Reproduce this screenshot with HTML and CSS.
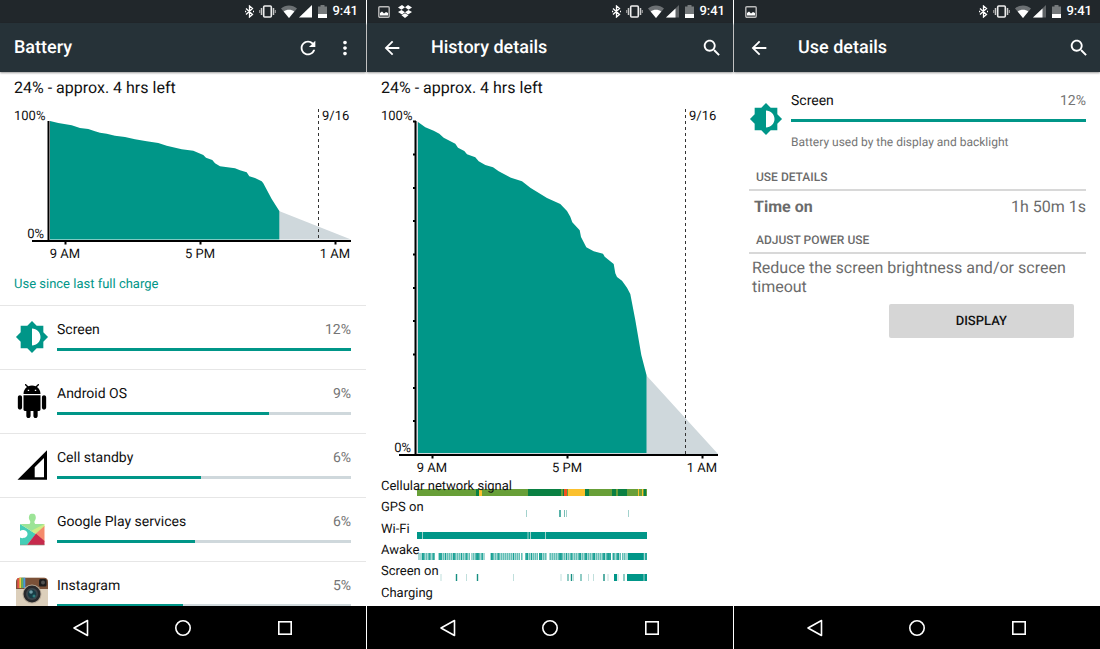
FILE: index.html
```html
<!DOCTYPE html>
<html lang="en">
<head>
    <meta charset="UTF-8">
    <meta name="viewport" content="width=device-width, initial-scale=1.0">
    <title>Battery</title>

    <link rel="stylesheet" href="styles.css">
</head>
<body>

    <!-- shared icons -->
    <svg class="sprite" aria-hidden="true">
        <symbol id="bluetooth" viewBox="0 0 9 13">
            <path d="M1 3.500l6.500 6L4.500 12V1l3 2.500L1 9.500M0 6.500h1.200M8 6.500h1" fill="none" stroke="#fff" stroke-width="1.300"/>
        </symbol>
        <symbol id="vibrate" viewBox="0 0 17 13">
            <rect x="4.700" y="1" width="7.600" height="11" rx="1" fill="none" stroke="#eee" stroke-width="1.600"/>
            <path d="M2.500 3v7M14.500 3v7" stroke="#ccc" stroke-width="1.500"/>
            <path d="M.7 5v3M16.300 5v3" stroke="#999" stroke-width="1.200"/>
        </symbol>
        <symbol id="wifi" viewBox="0 0 16 13">
            <path d="M0 3.500C4.500-.5 11.500-.5 16 3.500L8 13z" fill="#6c7073"/>
            <path d="M2.700 6.500C5.500 4.200 10.500 4.200 13.300 6.500L8 13z" fill="#fff"/>
        </symbol>
        <symbol id="signal" viewBox="0 0 13 13">
            <path d="M13 0v12.500H0z" fill="#fff"/>
        </symbol>
        <symbol id="signal-low" viewBox="0 0 13 13">
            <path d="M13 0v12.500H0z" fill="#5f6366"/>
            <path d="M9.500 3.400v9.100H0z" fill="#fff"/>
        </symbol>
        <symbol id="battery" viewBox="0 0 9 13">
            <path d="M2.500 0h4v1.500H9V9H0V1.500h2.500z" fill="#75797b"/>
            <path d="M0 9h9v4H0z" fill="#fff"/>
        </symbol>
        <symbol id="picture" viewBox="0 0 12 12">
            <rect x=".8" y=".8" width="10.400" height="10.400" rx="1" fill="none" stroke="#bbb" stroke-width="1.400"/>
            <path d="M2 9.500V7l2-1.500L6 7.500 8 6l2 1v2.500z" fill="#fff"/>
        </symbol>
        <symbol id="dropbox" viewBox="0 0 14 13">
            <path d="M4 0L7 2.300 3.500 4.700 0 2.600zM10 0l4 2.600-3.500 2.100L7 2.300zM0 7l3.500-2.100L7 7.300 4 9.500zM14 7l-3.500-2.100L7 7.300 10 9.500zM3.500 10.300L7 8.200l3.500 2.100L7 13z" fill="#fff"/>
        </symbol>
        <symbol id="arrow" viewBox="0 0 24 24">
            <path d="M20 11H7.830l5.590-5.590L12 4l-8 8 8 8 1.410-1.410L7.830 13H20v-2z" fill="#fff"/>
        </symbol>
        <symbol id="search" viewBox="0 0 24 24">
            <path d="M15.500 14h-.79l-.28-.27C15.410 12.590 16 11.110 16 9.500 16 5.910 13.090 3 9.500 3S3 5.910 3 9.500 5.910 16 9.500 16c1.610 0 3.090-.59 4.230-1.570l.27.28v.79l5 4.990L20.490 19l-4.990-5zm-6 0C7.010 14 5 11.990 5 9.500S7.010 5 9.500 5 14 7.010 14 9.500 11.990 14 9.500 14z" fill="#fff"/>
        </symbol>
        <symbol id="brightness" viewBox="0 0 24 24">
            <path d="M20 15.310L23.310 12 20 8.690V4h-4.690L12 .69 8.690 4H4v4.690L.69 12 4 15.310V20h4.690L12 23.310 15.310 20H20v-4.690zM12 18V6c3.310 0 6 2.690 6 6s-2.690 6-6 6z" fill="#009688"/>
        </symbol>
        <symbol id="nav-back" viewBox="0 0 20 20">
            <path d="M16.500 2.500v15L3 10z" fill="none" stroke="#fff" stroke-width="1.600" stroke-linejoin="round"/>
        </symbol>
        <symbol id="nav-home" viewBox="0 0 20 20">
            <circle cx="10" cy="10" r="7.200" fill="none" stroke="#fff" stroke-width="1.600"/>
        </symbol>
        <symbol id="nav-recent" viewBox="0 0 20 20">
            <rect x="3.800" y="3.800" width="12.400" height="12.400" fill="none" stroke="#fff" stroke-width="1.600"/>
        </symbol>
    </svg>

    <main class="screens">

        <!-- BATTERY -->
        <section class="screen">
            <div class="status-bar">
                <div class="status-icons">
                    <svg width="9" height="13"><use href="#bluetooth"/></svg>
                    <svg width="17" height="13"><use href="#vibrate"/></svg>
                    <span class="network">
                        <svg width="16" height="13"><use href="#wifi"/></svg>
                        <svg width="13" height="13"><use href="#signal"/></svg>
                    </span>
                    <svg width="9" height="13"><use href="#battery"/></svg>
                    <span class="clock">9:41</span>
                </div>
            </div>
            <header class="app-bar">
                <h1>Battery</h1>
                <button class="icon-button" aria-label="Refresh">
                    <svg viewBox="0 0 24 24"><path d="M17.650 6.350C16.200 4.900 14.210 4 12 4c-4.420 0-7.990 3.580-7.990 8s3.570 8 7.990 8c3.730 0 6.840-2.550 7.730-6h-2.080c-.82 2.330-3.040 4-5.650 4-3.310 0-6-2.690-6-6s2.690-6 6-6c1.660 0 3.140.69 4.220 1.780L13 11h7V4l-2.350 2.350z" fill="#fff"/></svg>
                </button>
                <button class="icon-button" aria-label="More options">
                    <svg viewBox="0 0 24 24"><path d="M12 8c1.100 0 2-.9 2-2s-.9-2-2-2-2 .9-2 2 .9 2 2 2zm0 2c-1.100 0-2 .9-2 2s.9 2 2 2 2-.9 2-2-.9-2-2-2zm0 6c-1.100 0-2 .9-2 2s.9 2 2 2 2-.9 2-2-.9-2-2-2z" fill="#fff"/></svg>
                </button>
            </header>

            <div class="content">
                <p class="summary">24% - approx. 4 hrs left</p>
                <svg class="chart" viewBox="0 0 366 163">
                    <polygon class="projected" points="279,109 351,137.500 279,137.500"/>
                    <polygon class="used" points="50,19 58.300,21 71.700,23.300 80,26 88.300,27 95,29.300 100,30.700 106.700,31.700 115,33.700 125,35 135,37.300 146.700,39.300 158.300,41 166.700,43.700 181.700,47.300 193.300,48.700 203.300,53 206,55.700 212.300,58 215,61.300 220,64.300 235,66.300 240,68.300 246.700,70.300 249.300,74.300 255,76 261.700,79.300 263.300,81.300 271.700,97 279.300,109 279.300,137.500 50,137.500"/>
                    <path class="axis" d="M48.500 19v120M32 139h319M65.500 139v3.500M200.500 139v3.500M335.500 139v3.500"/>
                    <path class="midnight" d="M318.500 7v131"/>
                    <text x="14" y="18">100%</text>
                    <text x="44" y="136" text-anchor="end">0%</text>
                    <text x="322" y="18">9/16</text>
                    <text x="65" y="156" text-anchor="middle">9 AM</text>
                    <text x="200" y="156" text-anchor="middle">5 PM</text>
                    <text x="335" y="156" text-anchor="middle">1 AM</text>
                </svg>
                <h2 class="caption">Use since last full charge</h2>

                <ul class="usage-list">
                    <li class="usage">
                        <svg class="app-icon" viewBox="0 0 24 24"><use href="#brightness"/></svg>
                        <div class="usage-body">
                            <div class="usage-text"><span>Screen</span><span class="percent">12%</span></div>
                            <div class="bar"><div class="fill" style="width: 100%"></div></div>
                        </div>
                    </li>
                    <li class="usage">
                        <svg class="app-icon android" viewBox="0 0 24 24"><path d="M6 18c0 .55.45 1 1 1h1v3.500c0 .83.67 1.500 1.500 1.500s1.500-.67 1.500-1.500V19h2v3.500c0 .83.67 1.500 1.500 1.500s1.500-.67 1.500-1.500V19h1c.55 0 1-.45 1-1V8H6v10zM3.500 8C2.670 8 2 8.670 2 9.500v7c0 .83.67 1.500 1.500 1.500S5 17.330 5 16.500v-7C5 8.670 4.330 8 3.500 8zm17 0c-.83 0-1.500.67-1.500 1.500v7c0 .83.67 1.500 1.500 1.500s1.500-.67 1.500-1.500v-7c0-.83-.67-1.500-1.500-1.500zm-4.970-5.840l1.300-1.300c.2-.2.2-.51 0-.71-.2-.2-.51-.2-.71 0l-1.480 1.480C13.850 1.230 12.950 1 12 1c-.96 0-1.860.23-2.660.63L7.850.15c-.2-.2-.51-.2-.71 0-.2.2-.2.51 0 .71l1.310 1.310C6.970 3.260 6 5.010 6 7h12c0-1.990-.97-3.750-2.470-4.840zM10 5H9V4h1v1zm5 0h-1V4h1v1z"/></svg>
                        <div class="usage-body">
                            <div class="usage-text"><span>Android OS</span><span class="percent">9%</span></div>
                            <div class="bar"><div class="fill" style="width: 72%"></div></div>
                        </div>
                    </li>
                    <li class="usage">
                        <svg class="app-icon" viewBox="0 0 34 34"><path fill-rule="evenodd" d="M2.500 31.700H32V2.200zM19.700 29.300V19.300L29 10v19.300z"/></svg>
                        <div class="usage-body">
                            <div class="usage-text"><span>Cell standby</span><span class="percent">6%</span></div>
                            <div class="bar"><div class="fill" style="width: 49%"></div></div>
                        </div>
                    </li>
                    <li class="usage">
                        <svg class="app-icon" viewBox="0 0 34 34">
                            <path d="M5 12L21 22 12 33H5v-7.500c2 1.500 7.500.5 7.500-3.500S7 17 5 19z" fill="#45cdb6"/>
                            <path d="M5 12h9.500c1.200-1.500 1-2.500 0-4-1-1.600-.7-3.500 0-5C15 1.200 19.700 1.200 20.200 3c.7 1.500 1 3.400 0 5-1 1.500-1.200 2.500 0 4h9.300L21 22z" fill="#9ce497"/>
                            <path d="M29.500 12v3L21 22l-5-3z" fill="#cdec86"/>
                            <path d="M29.500 14v16L21 21.500z" fill="#f58b6c"/>
                            <path d="M12 33l9-11.500L29.500 29v4z" fill="#c62a4c"/>
                            <path d="M5 33h24.500" stroke="#8d8d7c" stroke-width=".6"/>
                        </svg>
                        <div class="usage-body">
                            <div class="usage-text"><span>Google Play services</span><span class="percent">6%</span></div>
                            <div class="bar"><div class="fill" style="width: 47%"></div></div>
                        </div>
                    </li>
                    <li class="usage">
                        <svg class="app-icon" viewBox="0 0 34 34">
                            <rect x="1" y="1.700" width="32" height="31" rx="4" fill="#dccfbb"/>
                            <path d="M1 13V6a4.300 4.300 0 0 1 4-4.300h24A4.300 4.300 0 0 1 33 6v7z" fill="#7b5138"/>
                            <path d="M3.300 2.200V12" stroke="#e5534b" stroke-width="2"/>
                            <path d="M5.300 1.700V12" stroke="#f3cb3e" stroke-width="2"/>
                            <path d="M7.300 1.700V12" stroke="#5fb65c" stroke-width="2"/>
                            <path d="M9.300 1.700V12" stroke="#4a9bdc" stroke-width="2"/>
                            <rect x="24" y="3" width="7.500" height="7.500" rx="1.500" fill="#1d1c1c"/>
                            <circle cx="28" cy="6.500" r="2" fill="#52514f"/>
                            <circle cx="17" cy="18" r="9.500" fill="#b8aa98"/>
                            <circle cx="17" cy="18" r="8.500" fill="#28292c"/>
                            <circle cx="17" cy="18" r="6" fill="#3c464c"/>
                            <circle cx="17" cy="18" r="4.200" fill="#173c45"/>
                            <circle cx="16" cy="16" r="1.800" fill="#6f9ca6"/>
                            <circle cx="19" cy="20" r="1.500" fill="#2f7d7e"/>
                        </svg>
                        <div class="usage-body">
                            <div class="usage-text"><span>Instagram</span><span class="percent">5%</span></div>
                            <div class="bar"><div class="fill" style="width: 43%"></div></div>
                        </div>
                    </li>
                </ul>
            </div>

            <nav class="nav-bar">
                <button aria-label="Back"><svg width="20" height="20"><use href="#nav-back"/></svg></button>
                <button aria-label="Home"><svg width="20" height="20"><use href="#nav-home"/></svg></button>
                <button aria-label="Recent apps"><svg width="20" height="20"><use href="#nav-recent"/></svg></button>
            </nav>
        </section>

        <!-- HISTORY DETAILS -->
        <section class="screen">
            <div class="status-bar">
                <svg width="12" height="12"><use href="#picture"/></svg>
                <svg width="14" height="13"><use href="#dropbox"/></svg>
                <div class="status-icons">
                    <svg width="9" height="13"><use href="#bluetooth"/></svg>
                    <svg width="17" height="13"><use href="#vibrate"/></svg>
                    <span class="network">
                        <svg width="16" height="13"><use href="#wifi"/></svg>
                        <svg width="13" height="13"><use href="#signal-low"/></svg>
                    </span>
                    <svg width="9" height="13"><use href="#battery"/></svg>
                    <span class="clock">9:41</span>
                </div>
            </div>
            <header class="app-bar">
                <button class="icon-button back" aria-label="Navigate up"><svg><use href="#arrow"/></svg></button>
                <h1>History details</h1>
                <button class="icon-button" aria-label="Search"><svg><use href="#search"/></svg></button>
            </header>

            <div class="content">
                <p class="summary">24% - approx. 4 hrs left</p>
                <svg class="chart" viewBox="0 0 366 376">
                    <polygon class="projected" points="49,19 51,20 51,351 279,351 279,273 351,352 49,352"/>
                    <polygon class="used" points="51,20 58.300,25.300 66.700,28.700 72.300,31.700 76.700,35.700 88.300,41.700 91,45.700 97.300,49 100,52.300 108.300,55.300 111.700,59.300 118.300,63 126,65.300 131.700,69.300 144,75.700 155,79.300 163.300,85.700 180,96 193.300,102 200,109 203.300,114.700 205.300,120.300 212.700,128.300 214,135 219.300,145.300 226.700,149.300 236,151.700 237.700,154.700 246.700,162 248.300,171.300 250,175 255,178.700 260,185.700 263.300,192 268.300,218 274.300,253 279.500,273 279.500,351 51,351"/>
                    <path class="axis" d="M48.500 19v334M32 353h319M65.500 353v3.500M200.500 353v3.500M335.500 353v3.500"/>
                    <path class="axis" d="M46 19.500h3M46 52.500h3M46 86h3M46 119h3M46 152.500h3M46 186h3M46 219h3M46 252.500h3M46 286h3M46 319h3"/>
                    <path class="midnight" d="M318.500 7v345"/>
                    <text x="14" y="18">100%</text>
                    <text x="44" y="350" text-anchor="end">0%</text>
                    <text x="322" y="18">9/16</text>
                    <text x="65" y="370" text-anchor="middle">9 AM</text>
                    <text x="200" y="370" text-anchor="middle">5 PM</text>
                    <text x="335" y="370" text-anchor="middle">1 AM</text>
                </svg>

                <!-- one 7px strip per row, label drawn over it -->
                <svg class="chart" viewBox="0 0 366 128">
                    <g transform="translate(0 11)">
                        <path d="M50 0h230v7H50z" fill="#689f38"/>
                        <path d="M109 0h3v7h-3zM161 0h33v7h-33zM196 0h1v7h-1zM218 0h4v7h-4zM245 0h4v7h-4zM251 0h9v7h-9zM277 0h2v7h-2z" fill="#0a8043"/>
                        <path d="M112 0h3v7h-3zM201 0h17v7h-17zM271 0h1v7h-1zM275 0h1v7h-1z" fill="#fbc02d"/>
                        <path d="M197 0h3v7h-3z" fill="#f4511e"/>
                        <text x="14" y="1">Cellular network signal</text>
                    </g>
                    <g transform="translate(0 32)">
                        <path d="M159.500 0v7M197.500 0v7M199.500 0v7M261.500 0v7" stroke="#a3d2cd"/>
                        <path d="M193 0v7" stroke="#2d9f93" stroke-width="1.600"/>
                        <path d="M197.500 0v7" stroke="#75bcb4"/>
                        <text x="14" y="1">GPS on</text>
                    </g>
                    <g transform="translate(0 54)">
                        <path d="M50 0h230v7H50z" fill="#009688"/>
                        <path d="M55.500 0v7M161 0v7M163.500 0v7M178.500 0v7" stroke="#9fd0ca"/>
                        <text x="14" y="1">Wi-Fi</text>
                    </g>
                    <g transform="translate(0 75)" stroke="#009688" stroke-width="7" fill="none">
                        <path opacity=".35" d="M51 3.500h17M71 3.500h32M105 3.500h13M123 3.500h30M154 3.500h2M158 3.500h13M172 3.500h8M182 3.500h61M246 3.500h8M255 3.500h25"/>
                        <path opacity=".4" stroke-dasharray="1 1" d="M55 3.500h13M76 3.500h40M124 3.500h31M158 3.500h22M183 3.500h76"/>
                        <path opacity=".75" d="M55 3.500h2M62 3.500h1M66 3.500h1M72 3.500h3M78 3.500h1M86 3.500h2M94 3.500h1M99 3.500h1M109 3.500h3M115 3.500h1M124 3.500h2M131 3.500h1M146 3.500h1M159 3.500h2M164 3.500h1M172 3.500h3M192 3.500h3M199 3.500h1M204 3.500h1M212 3.500h2M218 3.500h2M226 3.500h2M236 3.500h2M240 3.500h4M246 3.500h1M250 3.500h2M261 3.500h16M278 3.500h2"/>
                        <path d="M261 3.500h15"/>
                        <text x="14" y="1">Awake</text>
                    </g>
                    <g transform="translate(0 96)">
                        <path d="M74 0v7M99.500 0v7M146.500 0v7M194 0v7M206.500 0v7M221.500 0v7M226.500 0v7M241 0v7M251 0v7" stroke="#c0dfdc"/>
                        <path d="M201 0v7M214 0v7M257 0v7" stroke="#6ebcb3" stroke-width="1.500"/>
                        <path d="M89.500 0v7M110.500 0v7M204.500 0v7M237 0v7" stroke="#168f82" stroke-width="1.400"/>
                        <path d="M247 0h3v7h-3zM260 0h16v7h-16zM278 0h2v7h-2z" fill="#009688"/>
                        <path d="M276 0h2v7h-2z" fill="#4fb5aa"/>
                        <text x="14" y="1">Screen on</text>
                    </g>
                    <text x="14" y="119">Charging</text>
                </svg>
            </div>

            <nav class="nav-bar">
                <button aria-label="Back"><svg width="20" height="20"><use href="#nav-back"/></svg></button>
                <button aria-label="Home"><svg width="20" height="20"><use href="#nav-home"/></svg></button>
                <button aria-label="Recent apps"><svg width="20" height="20"><use href="#nav-recent"/></svg></button>
            </nav>
        </section>

        <!-- USE DETAILS -->
        <section class="screen">
            <div class="status-bar">
                <svg width="12" height="12"><use href="#picture"/></svg>
                <div class="status-icons">
                    <svg width="9" height="13"><use href="#bluetooth"/></svg>
                    <svg width="17" height="13"><use href="#vibrate"/></svg>
                    <span class="network">
                        <svg width="16" height="13"><use href="#wifi"/></svg>
                        <svg width="13" height="13"><use href="#signal-low"/></svg>
                    </span>
                    <svg width="9" height="13"><use href="#battery"/></svg>
                    <span class="clock">9:41</span>
                </div>
            </div>
            <header class="app-bar">
                <button class="icon-button back" aria-label="Navigate up"><svg><use href="#arrow"/></svg></button>
                <h1>Use details</h1>
                <button class="icon-button" aria-label="Search"><svg><use href="#search"/></svg></button>
            </header>

            <div class="content details">
                <div class="usage usage-top">
                    <svg class="app-icon" viewBox="0 0 24 24"><use href="#brightness"/></svg>
                    <div class="usage-body">
                        <div class="usage-text"><span>Screen</span><span class="percent">12%</span></div>
                        <div class="bar"><div class="fill" style="width: 100%"></div></div>
                        <p class="description">Battery used by the display and backlight</p>
                    </div>
                </div>

                <h2 class="section-title">Use details</h2>
                <div class="detail-row"><strong>Time on</strong><span>1h 50m 1s</span></div>

                <h2 class="section-title">Adjust power use</h2>
                <p class="hint">Reduce the screen brightness and/or screen timeout</p>
                <button class="display-button">DISPLAY</button>
            </div>

            <nav class="nav-bar">
                <button aria-label="Back"><svg width="20" height="20"><use href="#nav-back"/></svg></button>
                <button aria-label="Home"><svg width="20" height="20"><use href="#nav-home"/></svg></button>
                <button aria-label="Recent apps"><svg width="20" height="20"><use href="#nav-recent"/></svg></button>
            </nav>
        </section>

    </main>
</body>
</html>
```
FILE: styles.css
```css
* {
    box-sizing: border-box;
}

body {
    margin: 0;
    background-color: white;
    font-family: Roboto, sans-serif;
    font-size: 14px;
    color: #111;
    text-rendering: geometricPrecision;
}

h1, h2, p, ul {
    margin: 0;
    padding: 0;
}

button {
    padding: 0;
    border: none;
    background: none;
    font-family: inherit;
    text-rendering: inherit;
}

svg {
    display: block;
}

.sprite {
    position: absolute;
    width: 0;
    height: 0;
}

.screens {
    display: grid;
    grid-template-columns: repeat(3, minmax(0, 1fr));
    gap: 1px;
    height: 100vh;
}

.screen {
    display: flex;
    flex-direction: column;
    min-height: 0;
}

/* status bar and app bar */
.status-bar {
    display: flex;
    align-items: center;
    gap: 8px;
    height: 23px;
    padding: 0 8px 0 11px;
    background-color: #21272b;
    color: white;
}

.status-icons {
    display: flex;
    align-items: center;
    gap: 5px;
    margin-left: auto;
}

.network {
    display: flex;
    gap: 2px;
    margin-right: 1px;
}

.clock {
    font-size: 13px;
    font-weight: 500;
}

.app-bar {
    display: flex;
    align-items: center;
    gap: 15px;
    height: 49px;
    padding: 0 10px 0 14px;
    background-color: #263238;
    box-shadow: 0 1px 2px rgba(0, 0, 0, 0.4);
    color: white;
}

.app-bar h1 {
    flex: 1;
    font-size: 18px;
    font-weight: 500;
}

.icon-button svg {
    width: 22px;
    height: 22px;
}

.back {
    margin-right: 13px;
}

.content {
    flex: 1;
    min-height: 0;
    overflow: hidden;
}

/* charts */
.summary {
    padding: 2px 0 0 14px;
    font-size: 16px;
    line-height: 28px;
}

.chart {
    width: 100%;
}

.chart text {
    font-size: 13px;
    fill: #111;
    stroke: none;
}

.used {
    fill: #009688;
}

.projected {
    fill: #cfd8dc;
}

.axis {
    fill: none;
    stroke: #000;
    stroke-width: 2;
}

.midnight {
    stroke: #333;
    stroke-dasharray: 3 3;
}

.caption {
    padding-left: 14px;
    font-size: 13px;
    font-weight: 400;
    line-height: 40px;
    color: #009688;
}

/* usage rows */
.usage-list {
    list-style: none;
}

.usage {
    display: flex;
    align-items: center;
    gap: 8px;
    height: 64px;
    padding: 0 15px 2px;
    border-top: 1px solid #e6e6e6;
}

.app-icon {
    width: 34px;
    height: 34px;
}

.android {
    height: 36px;
}

.usage-body {
    flex: 1;
    padding-bottom: 3px;
}

.usage-text {
    display: flex;
    justify-content: space-between;
    margin-bottom: 8px;
    line-height: 20px;
}

.percent {
    color: #757575;
}

.bar {
    height: 3px;
    background-color: #cfd8dc;
}

.fill {
    height: 3px;
    background-color: #009688;
}

/* use details */
.details {
    display: flex;
    flex-direction: column;
    padding: 19px 14px 0 15px;
    color: #6b6b6b;
}

.usage-top {
    height: auto;
    padding: 0;
    border: none;
    color: #111;
}

.usage-top .app-icon {
    margin-bottom: 8px;
}

.description {
    margin-top: 10px;
    font-size: 12px;
    line-height: 20px;
    color: #757575;
}

.section-title {
    margin-top: 12px;
    padding: 0 7px 2px;
    border-bottom: 2px solid #d8d8d8;
    font-size: 12px;
    font-weight: 500;
    line-height: 20px;
    text-transform: uppercase;
}

.detail-row {
    display: flex;
    justify-content: space-between;
    padding: 5px 0 0 5px;
    font-size: 16px;
    line-height: 22px;
}

.hint {
    padding: 4px 3px 0;
    font-size: 16px;
    line-height: 19px;
}

.display-button {
    align-self: flex-end;
    width: 55%;
    height: 34px;
    margin: 8px 12px 0 0;
    border-radius: 2px;
    background-color: #d6d6d6;
    color: #111;
    font-size: 13px;
    font-weight: 500;
}

/* navigation bar */
.nav-bar {
    display: grid;
    grid-template-columns: repeat(3, 28%);
    justify-content: center;
    height: 43px;
    background-color: black;
}

.nav-bar button {
    display: flex;
    align-items: center;
    justify-content: center;
}
```
